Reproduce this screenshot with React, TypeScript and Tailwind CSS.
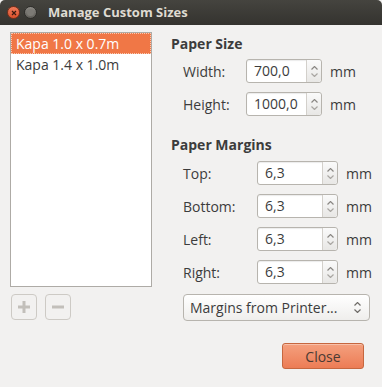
import { useState } from 'react';

const SIZES = ['Kapa 1.0 x 0.7m', 'Kapa 1.4 x 1.0m'];

const MARGINS = [
  { label: 'Top:', value: '6,3' },
  { label: 'Bottom:', value: '6,3' },
  { label: 'Left:', value: '6,3' },
  { label: 'Right:', value: '6,3' },
];

function SpinBox({ value, width }: { value: string; width: string }) {
  return (
    <div className={`flex h-[24px] ${width} rounded-[3px] border border-[#b7b4ae] bg-white shadow-[inset_0_1px_1px_rgba(0,0,0,0.08)]`}>
      <div className="flex-1 pl-[7px] leading-[22px] text-[#3c3c3c]">{value}</div>
      <div className="flex w-[15px] flex-col items-center justify-center gap-[3px] border-l border-[#d3d0cb] bg-gradient-to-b from-[#fafafa] to-[#e8e7e5] rounded-r-[3px]">
        <svg width="7" height="4" viewBox="0 0 7 4"><path d="M0.5 3.5 L3.5 0.5 L6.5 3.5" fill="none" stroke="#8a8783" strokeWidth="1.2" /></svg>
        <svg width="7" height="4" viewBox="0 0 7 4"><path d="M0.5 0.5 L3.5 3.5 L6.5 0.5" fill="none" stroke="#a9a6a2" strokeWidth="1.2" /></svg>
      </div>
    </div>
  );
}

export default function App() {
  const [selected, setSelected] = useState(0);

  return (
    <div
      className="w-[382px] h-[387px] bg-[#f2f1f0] text-[14px] text-[#3c3c3c] overflow-hidden flex flex-col"
      style={{ fontFamily: '"Open Sans", "Noto Sans", sans-serif' }}
    >
      {/* Title bar */}
      <div className="h-[25px] flex items-center bg-gradient-to-b from-[#45443f] to-[#34332f] rounded-t-[5px] shrink-0">
        <div className="ml-[7px] w-[13px] h-[13px] rounded-full bg-gradient-to-b from-[#f07a5a] to-[#d9502a] border border-[#7a2f1a] flex items-center justify-center">
          <svg width="6" height="6" viewBox="0 0 6 6"><path d="M1 1 L5 5 M5 1 L1 5" stroke="#3a1a10" strokeWidth="1.2" /></svg>
        </div>
        <div className="ml-[4px] w-[13px] h-[13px] rounded-full bg-gradient-to-b from-[#8c8a85] to-[#5f5d58] border border-[#2e2d2a] flex items-center justify-center">
          <div className="w-[7px] h-[7px] rounded-full bg-[#7c7a75]" />
        </div>
        <div className="ml-[11px] text-[13px] font-bold text-[#dfdbd2]">Manage Custom Sizes</div>
      </div>

      <div className="flex flex-1">
        {/* Left column */}
        <div className="ml-[10px] mt-[7px] flex flex-col">
          <div className="w-[142px] h-[255px] border border-[#aeaba6] bg-white">
            {SIZES.map((s, i) => (
              <div
                key={s}
                onClick={() => setSelected(i)}
                className={
                  i === selected
                    ? 'h-[21px] pl-[4px] leading-[19px] bg-[#f07746] text-white border border-dotted border-[#f9c9b2]'
                    : 'h-[21px] pl-[5px] leading-[21px] text-[#3c3c3c]'
                }
              >
                {s}
              </div>
            ))}
          </div>
          <div className="mt-[7px] flex gap-[8px] ml-[1px]">
            <div className="w-[26px] h-[26px] rounded-[4px] border border-[#cdcac5] flex items-center justify-center">
              <svg width="14" height="14" viewBox="0 0 14 14"><path d="M7 1 V13 M1 7 H13" stroke="#c2bfba" strokeWidth="3" /></svg>
            </div>
            <div className="w-[26px] h-[26px] rounded-[4px] border border-[#cdcac5] flex items-center justify-center">
              <svg width="14" height="14" viewBox="0 0 14 14"><path d="M1 7 H13" stroke="#c2bfba" strokeWidth="3" /></svg>
            </div>
          </div>
        </div>

        {/* Right column */}
        <div className="ml-[19px] flex flex-col">
          <div className="mt-[9px] h-[20px] leading-[20px] font-bold">Paper Size</div>
          <div className="mt-[5px] flex flex-col gap-[9px] ml-[12px]">
            {[
              { label: 'Width:', value: '700,0' },
              { label: 'Height:', value: '1000,0' },
            ].map(r => (
              <div key={r.label} className="flex items-center">
                <div className="w-[63px]">{r.label}</div>
                <SpinBox value={r.value} width="w-[76px]" />
                <div className="ml-[8px]">mm</div>
              </div>
            ))}
          </div>

          <div className="mt-[19px] h-[20px] leading-[20px] font-bold">Paper Margins</div>
          <div className="mt-[6px] flex flex-col gap-[9px] ml-[12px]">
            {MARGINS.map(r => (
              <div key={r.label} className="flex items-center">
                <div className="w-[74px]">{r.label}</div>
                <SpinBox value={r.value} width="w-[81px]" />
                <div className="ml-[8px]">mm</div>
              </div>
            ))}
          </div>

          <div className="mt-[10px] ml-[12px] w-[187px] h-[27px] rounded-[4px] border border-[#b7b4ae] bg-gradient-to-b from-[#ffffff] to-[#efeeec] flex items-center pl-[6px] pr-[8px]">
            <div className="flex-1">Margins from Printer...</div>
            <div className="flex flex-col gap-[3px]">
              <svg width="7" height="4" viewBox="0 0 7 4"><path d="M0.5 3.5 L3.5 0.5 L6.5 3.5" fill="none" stroke="#6f6c68" strokeWidth="1.2" /></svg>
              <svg width="7" height="4" viewBox="0 0 7 4"><path d="M0.5 0.5 L3.5 3.5 L6.5 0.5" fill="none" stroke="#6f6c68" strokeWidth="1.2" /></svg>
            </div>
          </div>

          <div className="mt-[22px] ml-[111px] w-[82px] h-[26px] rounded-[3px] border border-[#c6673f] bg-gradient-to-b from-[#f4a07e] to-[#ec7c55] shadow-[inset_0_1px_0_rgba(255,255,255,0.35)] flex items-center justify-center text-[#4b3a33]">
            Close
          </div>
        </div>
      </div>
    </div>
  );
}
